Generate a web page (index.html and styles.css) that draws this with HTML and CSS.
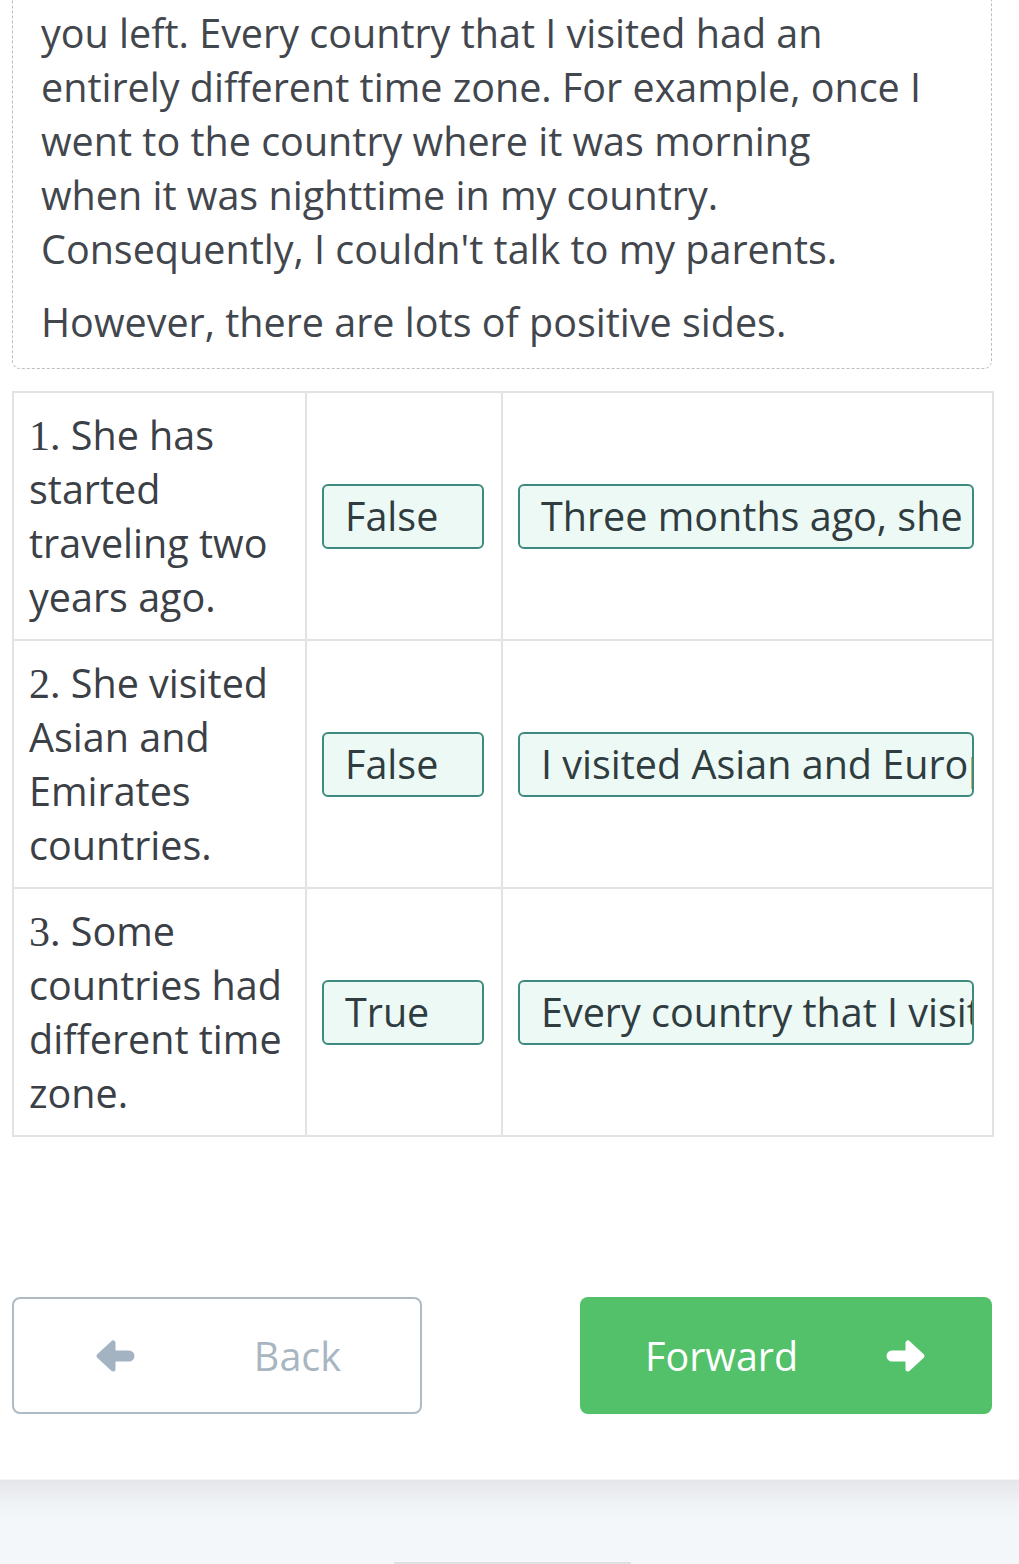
FILE: index.html
```html
<!DOCTYPE html>
<html lang="en">
<head>
<meta charset="utf-8">
<title>Reading task</title>
<link rel="stylesheet" href="styles.css">
</head>
<body>
<div class="page">
  <div class="card">
    <p class="para">I had to remember that the time was so different from the place when<br>you left. Every country that I visited had an<br>entirely different time zone. For example, once I<br>went to the country where it was morning<br>when it was nighttime in my country.<br>Consequently, I couldn't talk to my parents.</p>
    <p class="para">However, there are lots of positive sides.</p>
  </div>

  <table class="grid">
    <colgroup>
      <col class="c1">
      <col class="c2">
      <col class="c3">
    </colgroup>
    <tr>
      <td class="q"><span class="num">1.</span> She has started traveling two years ago.</td>
      <td class="a"><div class="chip chip-s">False</div></td>
      <td class="a"><div class="chip chip-l">Three months ago, she started traveling.</div></td>
    </tr>
    <tr>
      <td class="q"><span class="num">2.</span> She visited Asian and Emirates countries.</td>
      <td class="a"><div class="chip chip-s">False</div></td>
      <td class="a"><div class="chip chip-l">I visited Asian and European countries.</div></td>
    </tr>
    <tr>
      <td class="q"><span class="num">3.</span> Some countries had different time zone.</td>
      <td class="a"><div class="chip chip-s">True</div></td>
      <td class="a"><div class="chip chip-l">Every country that I visited had an entirely different time zone.</div></td>
    </tr>
  </table>

  <div class="nav">
    <button class="btn btn-back" type="button">
      <svg class="arrow" width="40" height="36" viewBox="0 0 40 36" aria-hidden="true">
        <polygon points="4,18 18,5 18,31" fill="#a3b3c2" stroke="#a3b3c2" stroke-width="5" stroke-linejoin="round"/>
        <line x1="15" y1="18" x2="34" y2="18" stroke="#a3b3c2" stroke-width="11" stroke-linecap="round"/>
      </svg>
      <span>Back</span>
    </button>
    <button class="btn btn-fwd" type="button">
      <span>Forward</span>
      <svg class="arrow" width="40" height="36" viewBox="0 0 40 36" aria-hidden="true">
        <polygon points="36,18 22,5 22,31" fill="#ffffff" stroke="#ffffff" stroke-width="5" stroke-linejoin="round"/>
        <line x1="6" y1="18" x2="25" y2="18" stroke="#ffffff" stroke-width="11" stroke-linecap="round"/>
      </svg>
    </button>
  </div>
</div>
<div class="footer"><div class="handle"></div></div>
</body>
</html>
```
FILE: styles.css
```css
html, body {
  margin: 0;
  padding: 0;
  background: #ffffff;
}
body {
  font-family: "Open Sans", "Noto Sans", sans-serif;
  font-size: 39.5px;
  line-height: 54px;
  color: #42464d;
  overflow: hidden;
}
.page {
  padding: 0 27px 0 12px;
}
.card {
  margin-top: -68px;
  border: 1px dashed #b9c0c6;
  border-radius: 8px;
  padding: 19px 10px 19px 28px;
  overflow: hidden;
}
.para {
  margin: 0;
  white-space: nowrap;
}
.para + .para {
  margin-top: 19px;
}
.grid {
  margin-top: 22px;
  width: 980px;
  border-collapse: collapse;
  table-layout: fixed;
  color: #3b4046;
}
.c1 { width: 293px; }
.c2 { width: 196px; }
.c3 { width: 491px; }
.grid td {
  border: 2px solid #dfe3e6;
  padding: 15px;
  height: 216px;
  vertical-align: middle;
}
.grid td.q {
  padding-left: 15px;
  padding-right: 10px;
}
.num {
  font-family: "Liberation Serif", "DejaVu Serif", serif;
  font-size: 42px;
  line-height: 1;
}
.chip {
  box-sizing: border-box;
  height: 65px;
  border: 2px solid #3f8a7f;
  border-radius: 6px;
  background: #edf9f4;
  color: #2f3c40;
  line-height: 61px;
  padding: 0 0 0 21px;
  white-space: nowrap;
  overflow: hidden;
}
.chip-s { width: 162px; }
.chip-l { width: 456px; }
.nav {
  margin-top: 160px;
  display: flex;
  justify-content: space-between;
}
.btn {
  box-sizing: border-box;
  height: 117px;
  border-radius: 8px;
  display: flex;
  align-items: center;
  justify-content: space-between;
  font-family: "Open Sans", "Noto Sans", sans-serif;
  font-size: 39.5px;
  cursor: pointer;
}
.btn-back {
  width: 410px;
  background: #ffffff;
  border: 2px solid #b0bac3;
  color: #a9b6c2;
  padding: 0 79px 0 81px;
}
.btn-fwd {
  width: 412px;
  background: #52c169;
  border: none;
  color: #ffffff;
  padding: 0 66px 0 65px;
}
.arrow {
  display: block;
}
.footer {
  margin-top: 65px;
  height: 86px;
  background: linear-gradient(#e4e6e9 0px, #f0f3f6 24px, #f4f7fa 40px, #f4f7fa 100%);
  border-top: 1px solid #f3f8f7;
  box-sizing: border-box;
  display: flex;
  justify-content: center;
  align-items: flex-end;
}
.handle {
  width: 237px;
  height: 3px;
  margin-left: 5px;
  background: #e0e0e2;
}
```
